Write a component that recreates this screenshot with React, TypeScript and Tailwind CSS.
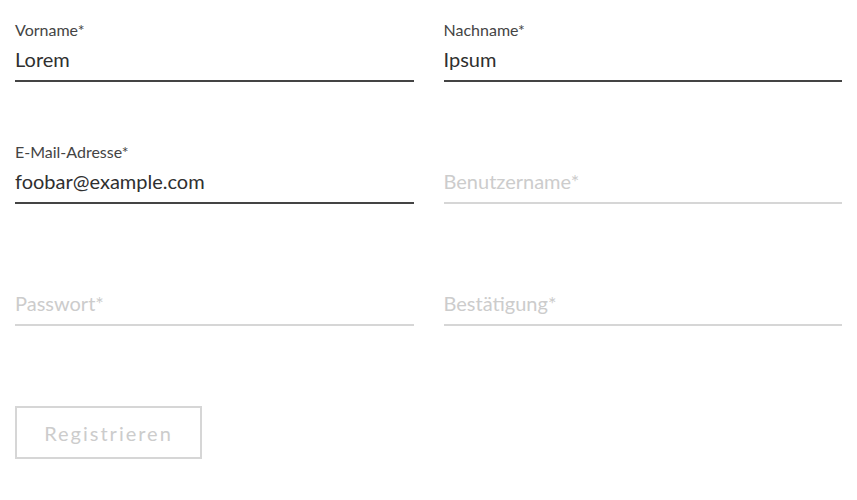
import React from 'react';

type Field = { label: string; value?: string };

const fields: Field[] = [
  { label: 'Vorname*', value: 'Lorem' },
  { label: 'Nachname*', value: 'Ipsum' },
  { label: 'E-Mail-Adresse*', value: 'foobar@example.com' },
  { label: 'Benutzername*' },
  { label: 'Passwort*' },
  { label: 'Bestätigung*' },
];

function TextField({ label, value }: Field) {
  const filled = !!value;
  return (
    <div className="flex flex-col">
      <div className="h-[20px] text-[16px] leading-[20px] text-[#444444]">{filled ? label : ''}</div>
      <input
        readOnly
        value={value ?? ''}
        placeholder={label}
        className={`h-[42px] w-full bg-transparent pb-[2px] text-[20px] text-[#2f2f2f] outline-none placeholder:text-[#cccccc] border-b-2 ${
          filled ? 'border-[#444444]' : 'border-[#d6d6d6]'
        }`}
      />
    </div>
  );
}

export default function App() {
  return (
    <div className="min-h-[500px] bg-white px-[15px] pt-[20px]" style={{ fontFamily: 'Lato, "Noto Sans", sans-serif' }}>
      <form className="grid grid-cols-2 gap-x-[30px] gap-y-[60px]">
        {fields.map((f) => (
          <TextField key={f.label} {...f} />
        ))}
      </form>
      <button
        type="button"
        className="mt-[80px] h-[53px] w-[187px] border-2 border-[#d6d6d6] text-[20px] tracking-[2px] text-[#cccccc]"
      >
        Registrieren
      </button>
    </div>
  );
}
